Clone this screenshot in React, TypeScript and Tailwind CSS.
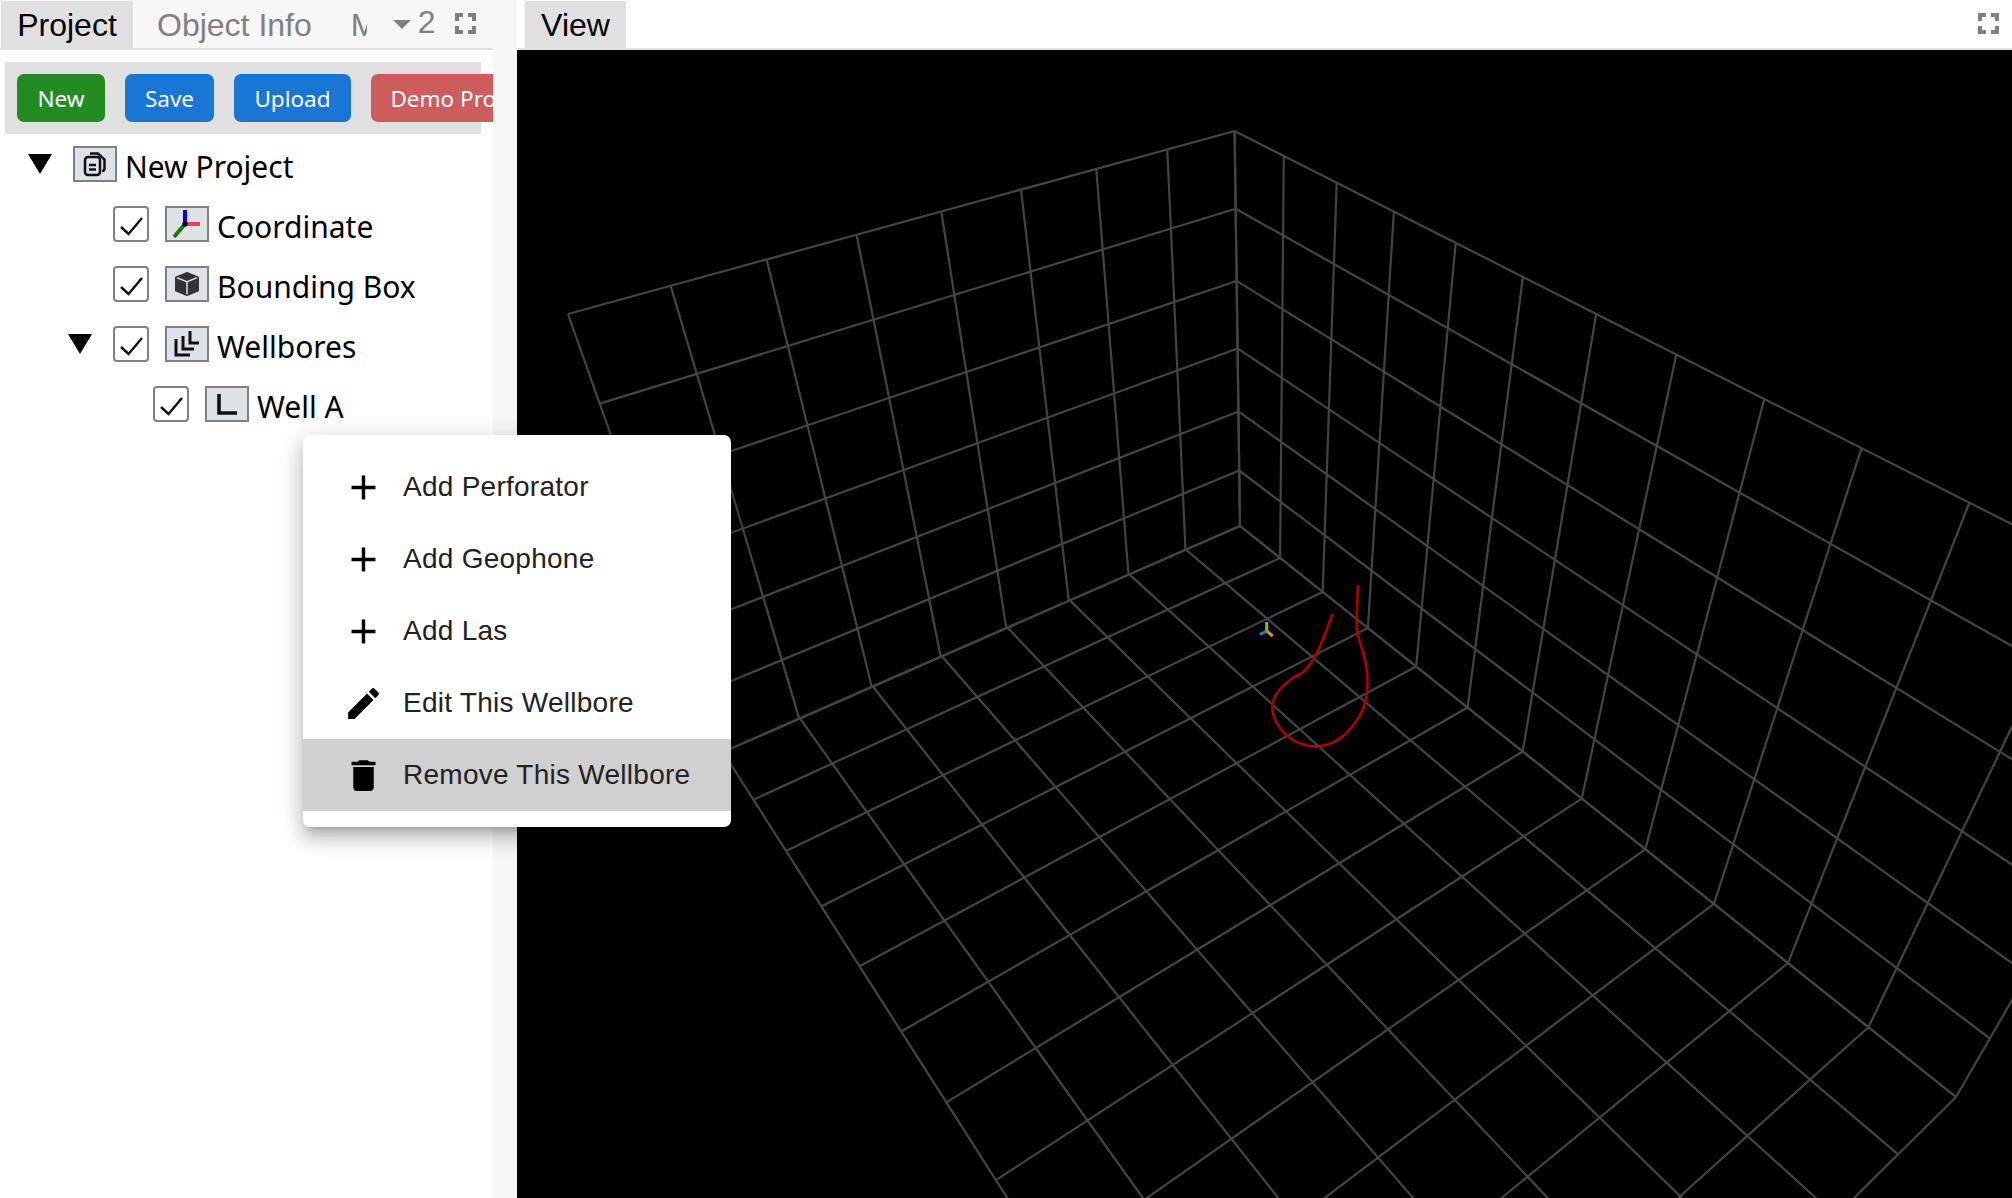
import React from 'react';
import { BsBoxFill } from 'react-icons/bs';

type Pt = [number, number];

// maps the unit square onto a quad, so a wall's grid keeps its perspective
const projector = ([p0, p1, p2, p3]: Pt[]) => {
  const dx1 = p1[0] - p2[0];
  const dx2 = p3[0] - p2[0];
  const sx = p0[0] - p1[0] + p2[0] - p3[0];
  const dy1 = p1[1] - p2[1];
  const dy2 = p3[1] - p2[1];
  const sy = p0[1] - p1[1] + p2[1] - p3[1];
  const den = dx1 * dy2 - dx2 * dy1;
  const g = (sx * dy2 - dx2 * sy) / den;
  const h = (dx1 * sy - sx * dy1) / den;
  const a = p1[0] - p0[0] + g * p1[0];
  const b = p3[0] - p0[0] + h * p3[0];
  const d = p1[1] - p0[1] + g * p1[1];
  const e = p3[1] - p0[1] + h * p3[1];
  return (u: number, v: number): Pt => {
    const w = g * u + h * v + 1;
    return [(a * u + b * v + p0[0]) / w, (d * u + e * v + p0[1]) / w];
  };
};

const gridPath = (corners: Pt[], cols: number, rows: number) => {
  const at = projector(corners);
  let d = '';
  const seg = (s: Pt, t: Pt) => {
    d += `M${s[0].toFixed(1)} ${s[1].toFixed(1)}L${t[0].toFixed(1)} ${t[1].toFixed(1)}`;
  };
  for (let i = 0; i <= cols; i++) seg(at(i / cols, 0), at(i / cols, 1));
  for (let j = 0; j <= rows; j++) seg(at(0, j / rows), at(1, j / rows));
  return d;
};

const leftWall: Pt[] = [[1234.6, 131], [568, 314], [723, 752], [1240, 526]];
const rightWall: Pt[] = [[1234.6, 131], [2225, 632], [1956, 1097], [1240, 526]];
const floor: Pt[] = [[1240, 526], [723, 752], [1335, 1712], [1956, 1097]];

const wellPoints: Pt[] = [
  [474, 75], [468, 190], [475, 235], [497, 300], [505, 370], [495, 440], [460, 500], [410, 545], [350, 563],
  [290, 550], [245, 515], [220, 470], [215, 440], [225, 405], [250, 375], [280, 352], [310, 338], [340, 300],
  [360, 260], [380, 210], [397, 162],
].map((p) => [1200 + p[0] / 3, 560 + p[1] / 3] as Pt);

// smooth the traced points with quadratic segments through the midpoints
const wellD = wellPoints.reduce((d, p, i) => {
  if (i === 0) return `M${p[0]} ${p[1]}`;
  const next = wellPoints[i + 1];
  if (!next) return `${d}L${p[0]} ${p[1]}`;
  return `${d}Q${p[0]} ${p[1]} ${(p[0] + next[0]) / 2} ${(p[1] + next[1]) / 2}`;
}, '');

const MaxIcon = () => (
  <svg width="21" height="21" viewBox="0 0 21 21" fill="none" stroke="#808080" strokeWidth="4">
    <path d="M2 8V2h6M13 2h6v6M19 13v6h-6M8 19H2v-6" />
  </svg>
);

const Triangle = () => (
  <svg width="24" height="20" viewBox="0 0 24 20" className="shrink-0">
    <path d="M0 0h24L12 20z" fill="#000" />
  </svg>
);

const Check = () => (
  <div className="w-[36px] h-[36px] shrink-0 border-2 border-[#808080] rounded-[4px] bg-white flex items-center justify-center">
    <svg width="28" height="28" viewBox="0 0 28 28" fill="none" stroke="#111" strokeWidth="2.4">
      <path d="M4 17l7.5 7L25 8" />
    </svg>
  </div>
);

const IconBox = ({ children }: { children: React.ReactNode }) => (
  <div className="w-[44px] h-[36px] shrink-0 border-2 border-[#808080] bg-[#dee2e6] flex items-center justify-center">
    {children}
  </div>
);

const Label = ({ children }: { children: React.ReactNode }) => (
  <span className="ml-[8px] text-[30px] leading-[36px] text-black translate-y-[3px] whitespace-nowrap font-['Noto_Sans',sans-serif]">
    {children}
  </span>
);

const TreeRow = ({
  left,
  arrow,
  check = true,
  icon,
  label,
}: {
  left: string;
  arrow?: boolean;
  check?: boolean;
  icon: React.ReactNode;
  label: string;
}) => (
  <div className={`flex items-center h-[60px] ${left}`}>
    {arrow && <div className="w-[45px] shrink-0"><Triangle /></div>}
    {check && <Check />}
    <div className={check ? 'ml-[16px]' : ''}>
      <IconBox>{icon}</IconBox>
    </div>
    <Label>{label}</Label>
  </div>
);

const FilesIcon = () => (
  <svg width="24" height="26" viewBox="0 0 24 26" fill="none" stroke="#111" strokeWidth="2.5">
    <rect x="2" y="6" width="15" height="18" rx="3" />
    <path d="M7 2.500h8l6.500 6v9c0 1.500-1 2.500-2.500 2.500" />
    <path d="M6 14h7M6 18.500h7" />
  </svg>
);

const CoordIcon = () => (
  <svg width="40" height="32" viewBox="0 0 40 32">
    <path d="M18 16V2" stroke="#0000e0" strokeWidth="4" />
    <path d="M18 16h15" stroke="#ff3a4a" strokeWidth="4" />
    <path d="M18 16L7 29" stroke="#167a16" strokeWidth="4" />
    <circle cx="18" cy="16" r="2.600" fill="#000" />
  </svg>
);

const WellboresIcon = () => (
  <svg width="28" height="28" viewBox="0 0 28 28" fill="none" stroke="#111" strokeWidth="3">
    <path d="M3 9v16h14M10 6v13h11M17 1v12h9" />
  </svg>
);

const WellIcon = () => (
  <svg width="24" height="24" viewBox="0 0 24 24" fill="none" stroke="#111" strokeWidth="3.6">
    <path d="M4 2v19h18" />
  </svg>
);

const Btn = ({ bg, w, label }: { bg: string; w: string; label: string }) => (
  <button className={`${bg} ${w} h-[48px] pt-[2px] shrink-0 rounded-[7px] text-white text-[22.5px] font-['Noto_Sans',sans-serif] text-center whitespace-nowrap`}>
    {label}
  </button>
);

const menuAdd = 'M19 13h-6v6h-2v-6H5v-2h6V5h2v6h6v2z';
const menuEdit =
  'M3 17.25V21h3.75L17.81 9.94l-3.75-3.75L3 17.25zM20.71 7.04c.39-.39.39-1.02 0-1.41l-2.34-2.34a.9959.9959 0 0 0-1.41 0l-1.83 1.83 3.75 3.75 1.83-1.83z';
const menuDelete = 'M6 19c0 1.100.9 2 2 2h8c1.100 0 2-.9 2-2V7H6v12zM19 4h-3.500l-1-1h-5l-1 1H5v2h14V4z';

const MenuRow = ({ path, label, active }: { path: string; label: string; active?: boolean }) => (
  <div className={`flex items-center h-[72px] pl-[40px] ${active ? 'bg-[#d0d0d0]' : ''}`}>
    <svg width="41" height="41" viewBox="0 0 24 24" className="shrink-0">
      <path d={path} fill="#000" />
    </svg>
    <span className="ml-[19px] text-[28px] tracking-[0.26px] text-[#212121] whitespace-nowrap font-['Liberation_Sans',sans-serif]">{label}</span>
  </div>
);

export default function App() {
  return (
    <div className="relative w-[2012px] h-[1198px] overflow-hidden flex bg-[#f7f7f7] font-['Liberation_Sans',sans-serif]">
      <div className="w-[493px] shrink-0 h-full bg-white flex flex-col overflow-hidden">
        <div className="h-[50px] shrink-0 bg-[#f7f7f7] border-b-2 border-[#e0e0e0] flex items-start pt-px pl-px relative">
          <div className="w-[132px] h-[47px] bg-[#e0e0e0] flex items-center justify-center text-[32px] text-black">Project</div>
          <div className="ml-[24px] h-[47px] flex items-center text-[32px] text-[#808080] whitespace-nowrap">Object Info</div>
          <div className="ml-[39px] w-[16px] h-[47px] overflow-hidden flex items-center text-[32px] text-[#808080]">M</div>
          <svg width="18" height="9" viewBox="0 0 18 9" className="ml-[26px] mt-[19px] shrink-0">
            <path d="M0 0h18L9 9z" fill="#808080" />
          </svg>
          <div className="ml-[7px] h-[42px] flex items-center text-[32px] text-[#808080]">2</div>
          <div className="ml-[19px] mt-[12px]"><MaxIcon /></div>
        </div>
        <div className="mt-[12px] ml-[5px] w-[476px] h-[72px] shrink-0 bg-[#e0e0e0] flex gap-[20px] pl-[12px] pt-[12px]">
          <Btn bg="bg-[#228b22]" w="w-[88px]" label="New" />
          <Btn bg="bg-[#1976d2]" w="w-[89px]" label="Save" />
          <Btn bg="bg-[#1976d2]" w="w-[117px]" label="Upload" />
          <Btn bg="bg-[#cd5c5c]" w="w-[182px]" label="Demo Project" />
        </div>
        <div className="flex flex-col">
          <TreeRow left="pl-[28px]" arrow check={false} icon={<FilesIcon />} label="New Project" />
          <TreeRow left="pl-[113px]" icon={<CoordIcon />} label="Coordinate" />
          <TreeRow left="pl-[113px]" icon={<BsBoxFill size={24} color="#333" />} label="Bounding Box" />
          <TreeRow left="pl-[68px]" arrow icon={<WellboresIcon />} label="Wellbores" />
          <TreeRow left="pl-[153px]" icon={<WellIcon />} label="Well A" />
        </div>
      </div>

      <div className="w-[24px] shrink-0 h-full bg-[#f7f7f7]" />

      <div className="flex-1 h-full flex flex-col bg-black">
        <div className="h-[50px] shrink-0 bg-white border-b-2 border-[#e0e0e0] flex items-start justify-between pt-px pl-[8px] pr-[13px]">
          <div className="w-[101px] h-[47px] bg-[#e0e0e0] flex items-center justify-center text-[32px] text-black">View</div>
          <div className="mt-[12px]"><MaxIcon /></div>
        </div>
        <div className="flex-1 min-h-0 bg-black">
          <svg width="1495" height="1148" viewBox="517 50 1495 1148" className="block">
            <g fill="none" stroke="#444444" strokeWidth="2.2">
              <path d={gridPath(leftWall, 8, 6)} />
              <path d={gridPath(rightWall, 12, 6)} />
              <path d={gridPath(floor, 8, 12)} />
            </g>
            <path d={wellD} fill="none" stroke="#b00000" strokeWidth="2.6" strokeLinejoin="round" />
            <path d="M1266.700 631v-9" stroke="#8fc010" strokeWidth="3" />
            <path d="M1266.700 631l-7 3.500" stroke="#0088dd" strokeWidth="3" />
            <path d="M1266.700 631l6 5" stroke="#e09010" strokeWidth="3" />
          </svg>
        </div>
      </div>

      <div className="absolute left-[303px] top-[435px] w-[428px] h-[392px] py-[16px] bg-white rounded-[7px] shadow-[0px_8px_8px_-5px_rgba(0,0,0,0.2),0px_12px_18px_2px_rgba(0,0,0,0.14),0px_5px_24px_4px_rgba(0,0,0,0.12)]">
        <MenuRow path={menuAdd} label="Add Perforator" />
        <MenuRow path={menuAdd} label="Add Geophone" />
        <MenuRow path={menuAdd} label="Add Las" />
        <MenuRow path={menuEdit} label="Edit This Wellbore" />
        <MenuRow path={menuDelete} label="Remove This Wellbore" active />
      </div>
    </div>
  );
}
